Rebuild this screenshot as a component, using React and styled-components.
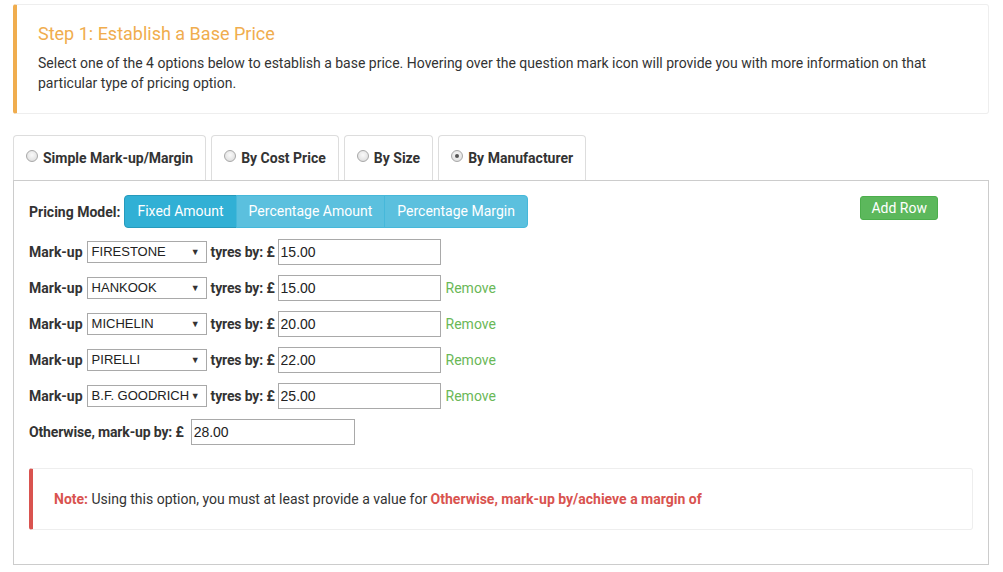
import React from "react";
import styled, { createGlobalStyle } from "styled-components";

const Global = createGlobalStyle`
  html, body { margin: 0; padding: 0; background: #fff; }
  body { font-family: Roboto, "Liberation Sans", Arial, sans-serif; font-size: 14px; line-height: 20px; color: #333; }
  * { box-sizing: border-box; }
`;

const Page = styled.div`
  padding: 4px 14px 8px 13px;
`;

const Callout = styled.div`
  border: 1px solid #eee;
  border-left: 4px solid ${(p) => p.$color};
  border-radius: 3px;
  padding: ${(p) => (p.$compact ? "20px 20px 20px 21px" : "18px 20px 20px 21px")};
`;

const Title = styled.h4`
  margin: 0 0 8px;
  font-size: 18px;
  line-height: 22px;
  font-weight: 400;
  color: #f0ad4e;
`;

const Para = styled.p`
  margin: 0;
`;

const Tabs = styled.div`
  display: flex;
  gap: 5px;
  margin-top: 21px;
`;

const Tab = styled.div`
  height: 45px;
  display: flex;
  align-items: center;
  gap: 5px;
  padding: 0 12px;
  border: 1px solid #ddd;
  border-bottom: none;
  border-radius: 4px 4px 0 0;
  font-weight: 700;
  color: #333;
`;

const Radio = styled.span`
  width: 12px;
  height: 12px;
  border-radius: 50%;
  border: 1px solid #a8a8a8;
  background: radial-gradient(circle at 50% 40%, #fafafa 0%, #e6e6e6 60%, #d2d2d2 100%);
  position: relative;
  margin-top: -4px;
  flex: none;
  &::after {
    content: "";
    display: ${(p) => (p.$checked ? "block" : "none")};
    position: absolute;
    left: 3px;
    top: 3px;
    width: 4px;
    height: 4px;
    border-radius: 50%;
    background: #555;
  }
`;

const Panel = styled.div`
  border: 1px solid #ccc;
  padding: 14px 15px 34px 15px;
`;

const TopRow = styled.div`
  display: flex;
  justify-content: space-between;
  align-items: flex-start;
  padding-right: 35px;
`;

const ModelGroup = styled.div`
  display: flex;
  align-items: center;
`;

const Label = styled.span`
  font-weight: 700;
  margin-right: ${(p) => p.$gap ?? 4}px;
  letter-spacing: ${(p) => (p.$tight ? "-0.15px" : "0")};
  white-space: nowrap;
`;

const BtnGroup = styled.div`
  display: flex;
`;

const InfoBtn = styled.button`
  font-family: Roboto, "Liberation Sans", Arial, sans-serif;
  font-size: 14px;
  line-height: 19px;
  padding: 6px 12px;
  color: #fff;
  background: ${(p) => (p.$active ? "#31b0d5" : "#5bc0de")};
  border: 1px solid ${(p) => (p.$active ? "#269abc" : "#46b8da")};
  margin-left: -1px;
  border-radius: 0;
  cursor: pointer;
  &:first-child { margin-left: 0; border-radius: 4px 0 0 4px; }
  &:last-child { border-radius: 0 4px 4px 0; }
`;

const AddBtn = styled.button`
  font-family: Roboto, "Liberation Sans", Arial, sans-serif;
  font-size: 14px;
  line-height: 20px;
  padding: 1px 10px;
  margin-top: 1px;
  color: #fff;
  background: #5cb85c;
  border: 1px solid #4cae4c;
  border-radius: 3px;
`;

const Rows = styled.div`
  display: flex;
  flex-direction: column;
  gap: 10px;
  margin-top: 11px;
`;

const Row = styled.div`
  display: flex;
  align-items: center;
  height: 26px;
`;

const SelectBox = styled.div`
  width: 120px;
  height: 22px;
  border: 1px solid #a9a9a9;
  display: flex;
  align-items: center;
  justify-content: space-between;
  padding: 0 6px 0 4px;
  font-family: "Liberation Sans", Arial, sans-serif;
  font-size: 13px;
  color: #222;
  margin-right: 4px;
  background: #fff;
  white-space: nowrap;
  overflow: hidden;
`;

const Arrow = styled.span`
  font-size: 9px;
  color: #333;
`;

const TextInput = styled.input`
  width: ${(p) => p.$w}px;
  height: 26px;
  border: 1px solid #a9a9a9;
  padding: 1px 2px;
  font-family: "Liberation Sans", Arial, sans-serif;
  font-size: 14px;
  color: #222;
  margin-left: 3px;
  outline: none;
`;

const RemoveLink = styled.a`
  color: #6ab857;
  margin-left: 5px;
  text-decoration: none;
  cursor: pointer;
`;

const NoteWrap = styled.div`
  margin-top: 23px;
`;

const Strong = styled.strong`
  color: #d9534f;
  font-weight: 700;
`;

const rows = [
  ["FIRESTONE", "15.00", false],
  ["HANKOOK", "15.00", true],
  ["MICHELIN", "20.00", true],
  ["PIRELLI", "22.00", true],
  ["B.F. GOODRICH", "25.00", true],
];

export default function App() {
  return (
    <Page>
      <Global />
      <Callout $color="#f0ad4e">
        <Title>Step 1: Establish a Base Price</Title>
        <Para>
          Select one of the 4 options below to establish a base price. Hovering over the question mark icon will provide you with more information on that particular type of pricing option.
        </Para>
      </Callout>

      <Tabs>
        <Tab><Radio />Simple Mark-up/Margin</Tab>
        <Tab><Radio />By Cost Price</Tab>
        <Tab><Radio />By Size</Tab>
        <Tab><Radio $checked />By Manufacturer</Tab>
      </Tabs>

      <Panel>
        <TopRow>
          <ModelGroup>
            <Label>Pricing Model:</Label>
            <BtnGroup>
              <InfoBtn $active>Fixed Amount</InfoBtn>
              <InfoBtn>Percentage Amount</InfoBtn>
              <InfoBtn>Percentage Margin</InfoBtn>
            </BtnGroup>
          </ModelGroup>
          <AddBtn>Add Row</AddBtn>
        </TopRow>

        <Rows>
          {rows.map(([name, val, rm]) => (
            <Row key={name}>
              <Label>Mark-up</Label>
              <SelectBox>
                <span>{name}</span>
                <Arrow>▼</Arrow>
              </SelectBox>
              <Label $tight $gap={0}>tyres by: £</Label>
              <TextInput $w={163} defaultValue={val} />
              {rm && <RemoveLink>Remove</RemoveLink>}
            </Row>
          ))}
          <Row>
            <Label $tight $gap={4}>Otherwise, mark-up by: £</Label>
            <TextInput $w={164} defaultValue="28.00" />
          </Row>
        </Rows>

        <NoteWrap>
          <Callout $color="#d9534f" $compact>
            <Strong>Note:</Strong> Using this option, you must at least provide a value for <Strong>Otherwise, mark-up by/achieve a margin of</Strong>
          </Callout>
        </NoteWrap>
      </Panel>
    </Page>
  );
}
